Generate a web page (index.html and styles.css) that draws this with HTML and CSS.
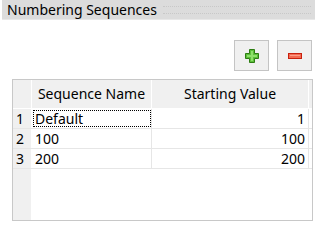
FILE: index.html
```html
<!DOCTYPE html>
<html lang="en">
<head>
    <meta charset="UTF-8">
    <title>Numbering Sequences</title>
    <link rel="stylesheet" href="styles.css">
</head>
<body>
    <div class="titlebar">
        <span class="title">Numbering Sequences</span>
        <span class="dots"></span>
    </div>

    <div class="toolbar">
        <button class="tool" title="Add">
            <svg width="16" height="16" viewBox="0 0 16 16">
                <path d="M5.5 1.5h5v4h4v5h-4v4h-5v-4h-4v-5h4z" fill="#5cbf3a" stroke="#2d7d12"/>
                <path d="M7 3h2v4h4v2H9v4H7V9H3V7h4z" fill="#8ee06a"/>
            </svg>
        </button>
        <button class="tool" title="Remove">
            <svg width="16" height="16" viewBox="0 0 16 16">
                <rect x="1.5" y="5.5" width="13" height="5" fill="#f26a50" stroke="#c8200e"/>
                <rect x="3" y="7" width="10" height="1" fill="#ff9c88"/>
            </svg>
        </button>
    </div>

    <div class="grid">
        <div class="row head">
            <div class="rownum"></div>
            <div class="cell name">Sequence Name</div>
            <div class="cell value">Starting Value</div>
        </div>
        <div class="row">
            <div class="rownum">1</div>
            <div class="cell name focus">Default</div>
            <div class="cell value">1</div>
        </div>
        <div class="row">
            <div class="rownum">2</div>
            <div class="cell name">100</div>
            <div class="cell value">100</div>
        </div>
        <div class="row">
            <div class="rownum">3</div>
            <div class="cell name">200</div>
            <div class="cell value">200</div>
        </div>
        <div class="row filler">
            <div class="rownum"></div>
        </div>
    </div>
</body>
</html>
```

FILE: styles.css
```css
body {
    margin: 0;
    background: #fff;
    font-family: "Noto Sans", "DejaVu Sans", sans-serif;
    font-size: 14px;
    color: #000;
    width: 323px;
    height: 243px;
    overflow: hidden;
}

.titlebar {
    display: flex;
    align-items: center;
    margin: 0 8px 0 2px;
    height: 19px;
    padding-left: 5px;
    background: #dcdcdc;
    border-bottom: 1px solid #e8e8e8;
}

.title {
    font-size: 14px;
    line-height: 19px;
    white-space: nowrap;
}

.dots {
    flex: 1;
    height: 6px;
    margin: 0 4px 0 6px;
    border-top: 1px dotted #c8c8c8;
    border-bottom: 1px dotted #c8c8c8;
}

.toolbar {
    display: flex;
    justify-content: flex-end;
    gap: 8px;
    margin: 20px 11px 0 0;
}

.tool {
    width: 35px;
    height: 31px;
    padding: 0;
    display: flex;
    align-items: center;
    justify-content: center;
    background: #f0f0f0;
    border: 1px solid #c4c4c4;
}

.grid {
    margin: 8px 10px 0 12px;
    height: 140px;
    border: 1px solid #c8c8c8;
    display: flex;
    flex-direction: column;
}

.row {
    display: flex;
    height: 20px;
    line-height: 19px;
    border-bottom: 1px solid #e6e6e6;
    box-sizing: border-box;
}

.row.head {
    height: 29px;
    line-height: 28px;
    background: #f0f0f0;
    border-bottom: 1px solid #fff;
}

.row.filler {
    flex: 1;
    border-bottom: none;
}

.rownum {
    width: 19px;
    flex: none;
    background: #f0f0f0;
    border-right: 1px solid #fff;
    padding-left: 3px;
    box-sizing: border-box;
}

.cell {
    box-sizing: border-box;
    border-right: 1px solid #e6e6e6;
    white-space: nowrap;
}

.cell.name {
    width: 120px;
    padding-left: 3px;
}

.cell.value {
    width: 157px;
    text-align: right;
    padding-right: 3px;
}

.head .cell {
    text-align: center;
    padding: 0;
    border-right: 1px solid #fff;
}

.focus {
    outline: 1px dotted #000;
    outline-offset: -2px;
}
```
